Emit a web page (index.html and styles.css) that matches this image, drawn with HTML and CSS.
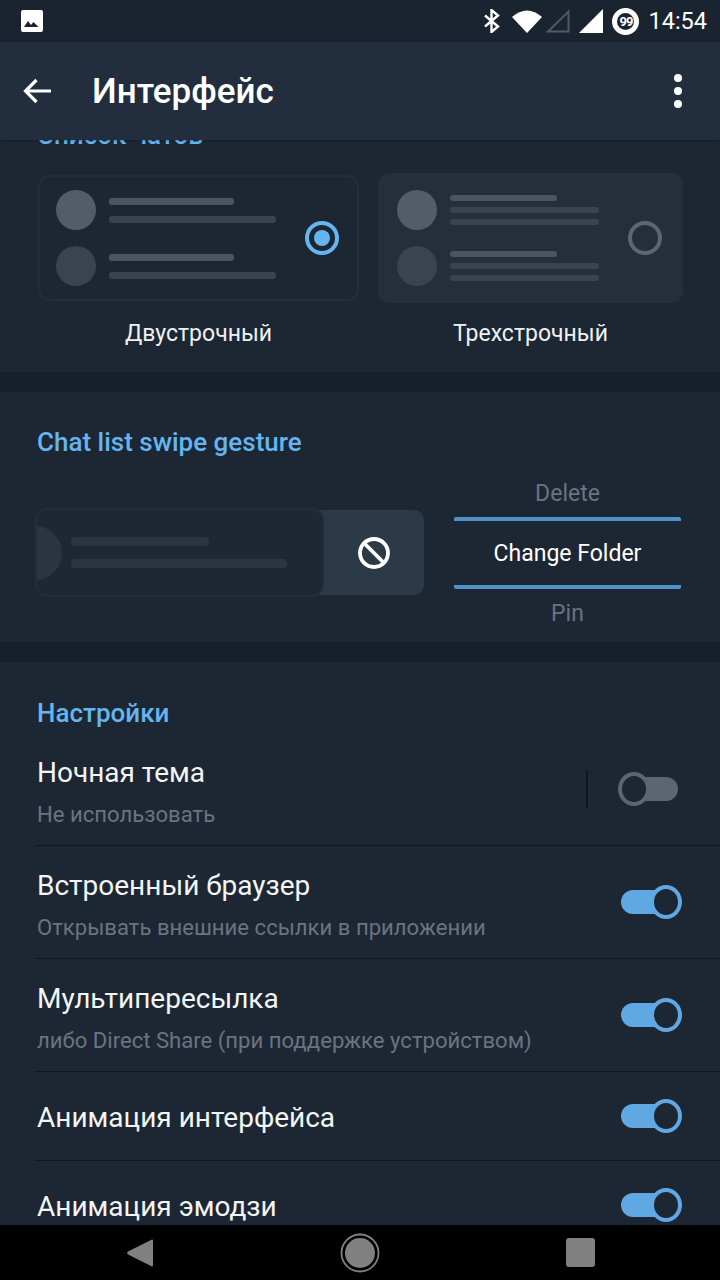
FILE: index.html
```html
<!DOCTYPE html>
<html lang="ru">
<head>
    <meta charset="UTF-8">
    <title>Интерфейс</title>
    <link rel="stylesheet" href="styles.css">
</head>
<body>

<div class="status-bar">
    <svg class="status-pic" width="22" height="22" viewBox="0 0 22 22"><rect width="22" height="22" rx="2" fill="#fff"/><path d="M3 17l4-6 3 4 2.500-3 5 5z" fill="#1a2430"/></svg>
    <div class="status-right">
        <svg class="st-bt" width="17" height="24" viewBox="0 0 17 24"><path d="M2 6.500l13 11-6.500 5.500V1l6.500 5.500-13 11" fill="none" stroke="#fff" stroke-width="2.400"/></svg>
        <svg class="st-wifi" width="30" height="24" viewBox="0 0 30 24"><path d="M0 8Q15-5 30 8L15 24z" fill="#fff"/></svg>
        <svg class="st-sig" width="24" height="24" viewBox="0 0 24 24"><path d="M2 22.500L22.500 2.500v20z" fill="none" stroke="#4f5863" stroke-width="2"/></svg>
        <svg class="st-sig2" width="24" height="24" viewBox="0 0 24 24"><path d="M0 24L24 0v24z" fill="#fff"/></svg>
        <div class="st-batt">99</div>
        <span class="st-time">14:54</span>
    </div>
</div>

<header class="app-bar">
    <svg width="30" height="26" viewBox="0 0 30 26"><path d="M28 13H3M13.500 2L2.500 13l11 11" fill="none" stroke="#fff" stroke-width="3.200"/></svg>
    <h1>Интерфейс</h1>
    <div class="dots"><i></i><i></i><i></i></div>
</header>

<main>
    <section class="sec sec-list">
        <h2 class="sec-title cut">Список чатов</h2>
        <div class="cards">
            <div class="option">
                <div class="card card-two">
                    <div class="previews">
                        <div class="pv"><b class="av"></b><div class="lines"><u class="l1"></u><u class="l2"></u></div></div>
                        <div class="pv dim"><b class="av"></b><div class="lines"><u class="l1"></u><u class="l2"></u></div></div>
                    </div>
                    <span class="radio on"></span>
                </div>
                <div class="opt-label">Двустрочный</div>
            </div>
            <div class="option">
                <div class="card card-three">
                    <div class="previews">
                        <div class="pv"><b class="av"></b><div class="lines"><u class="l1"></u><u class="l2"></u><u class="l2"></u></div></div>
                        <div class="pv dim"><b class="av"></b><div class="lines"><u class="l1"></u><u class="l2"></u><u class="l2"></u></div></div>
                    </div>
                    <span class="radio"></span>
                </div>
                <div class="opt-label">Трехстрочный</div>
            </div>
        </div>
    </section>

    <section class="sec sec-swipe">
        <h2 class="sec-title">Chat list swipe gesture</h2>
        <div class="swipe">
            <div class="swipe-demo">
                <div class="swipe-front">
                    <b class="half"></b>
                    <div class="swipe-lines"><u></u><u></u></div>
                </div>
                <div class="swipe-action">
                    <svg width="34" height="34" viewBox="0 0 34 34"><circle cx="17" cy="17" r="14" fill="none" stroke="#fff" stroke-width="3.800"/><path d="M7 7l20 20" stroke="#fff" stroke-width="3.800"/></svg>
                </div>
            </div>
            <div class="picker">
                <div class="pick">Delete</div>
                <div class="pick sel">Change Folder</div>
                <div class="pick">Pin</div>
            </div>
        </div>
    </section>

    <section class="sec sec-settings">
        <h2 class="sec-title">Настройки</h2>
        <div class="row">
            <div class="row-text"><div class="row-name">Ночная тема</div><div class="row-sub">Не использовать</div></div>
            <span class="vline"></span>
            <span class="toggle"></span>
        </div>
        <div class="row">
            <div class="row-text"><div class="row-name">Встроенный браузер</div><div class="row-sub">Открывать внешние ссылки в приложении</div></div>
            <span class="toggle on"></span>
        </div>
        <div class="row">
            <div class="row-text"><div class="row-name">Мультипересылка</div><div class="row-sub">либо Direct Share (при поддержке устройством)</div></div>
            <span class="toggle on"></span>
        </div>
        <div class="row">
            <div class="row-text single"><div class="row-name">Анимация интерфейса</div></div>
            <span class="toggle on"></span>
        </div>
        <div class="row">
            <div class="row-text single"><div class="row-name">Анимация эмодзи</div></div>
            <span class="toggle on"></span>
        </div>
    </section>
</main>

<nav class="nav-bar">
    <svg width="26" height="30" viewBox="0 0 26 30"><path d="M25 1.500a1 1 0 0 1 1 1v25a1 1 0 0 1-1 1L1 16.500a2 2 0 0 1 0-3z" fill="#808080"/></svg>
    <svg width="40" height="40" viewBox="0 0 40 40"><circle cx="20" cy="20" r="18.500" fill="none" stroke="#808080" stroke-width="1.800"/><circle cx="20" cy="20" r="15" fill="#808080"/></svg>
    <span class="nav-square"></span>
</nav>

</body>
</html>
```

FILE: styles.css
```css
*, *::before, *::after {
    box-sizing: border-box;
}
html, body {
    margin: 0;
    height: 100%;
}
body {
    width: 720px;
    height: 1280px;
    display: flex;
    flex-direction: column;
    overflow: hidden;
    font-family: Roboto, "Noto Sans", sans-serif;
    background: #17202a;
    color: #fff;
}
h1, h2 {
    margin: 0;
}

/* status bar */
.status-bar {
    height: 42px;
    flex: none;
    background: #1a2430;
    display: flex;
    align-items: center;
    justify-content: space-between;
    padding: 0 13px 0 21px;
}
.status-right {
    display: flex;
    align-items: center;
}
.st-wifi {
    margin-left: 12px;
}
.st-sig {
    margin-left: 4px;
}
.st-sig2 {
    margin-left: 9px;
}
.st-batt {
    width: 27px;
    height: 27px;
    margin-left: 9px;
    border: 5px solid #fff;
    border-radius: 50%;
    font-size: 13px;
    font-weight: 700;
    line-height: 17px;
    text-align: center;
    letter-spacing: -1px;
}
.st-time {
    margin-left: 9px;
    font-size: 23.500px;
    line-height: 28px;
}

/* app bar */
.app-bar {
    height: 98px;
    flex: none;
    background: #222e3d;
    display: flex;
    align-items: center;
    padding: 0 38px 0 23px;
    position: relative;
    z-index: 2;
    box-shadow: 0 1px 2px rgba(0, 0, 0, .25);
}
.app-bar h1 {
    margin-left: 39px;
    font-size: 35px;
    font-weight: 500;
}
.dots {
    margin-left: auto;
    display: flex;
    flex-direction: column;
    gap: 5px;
}
.dots i {
    width: 8px;
    height: 8px;
    border-radius: 50%;
    background: #fff;
}

/* sections */
main {
    flex: 1;
    min-height: 0;
    overflow: hidden;
}
.sec {
    background: #1d2733;
    margin-bottom: 20px;
}
.sec-title {
    font-size: 26px;
    font-weight: 500;
    line-height: 30px;
    color: #64b5f0;
    padding-left: 37px;
}
.cut {
    margin-top: -20px;
}

/* chat list type */
.sec-list {
    height: 252px;
}
.cards {
    display: flex;
    align-items: flex-start;
    padding: 23px 37px 0 38px;
    gap: 19px;
}
.option:first-child {
    width: 321px;
    padding-top: 2px;
}
.option:last-child {
    width: 305px;
}
.card {
    display: flex;
    align-items: center;
    border-radius: 12px;
}
.card-two {
    height: 126px;
    border: 2px solid #232e3b;
    padding: 0 18px 0 16px;
}
.card-three {
    height: 130px;
    background: #252f3c;
    padding: 0 21px 0 19px;
}
.previews {
    display: flex;
    flex-direction: column;
    gap: 16px;
}
.pv {
    display: flex;
    align-items: center;
    height: 40px;
}
.av {
    width: 40px;
    height: 40px;
    border-radius: 50%;
    background: #535c68;
    margin-right: 13px;
}
.dim .av {
    background: #3a444f;
}
.lines {
    display: flex;
    flex-direction: column;
    gap: 11px;
}
.lines u {
    display: block;
    height: 7px;
    border-radius: 3px;
    background: #4b5561;
}
.lines u.l2 {
    background: #3a444f;
}
.card-two .l1 {
    width: 125px;
}
.card-two .l2 {
    width: 167px;
}
.card-three .lines {
    gap: 6px;
}
.card-three .lines u {
    height: 6px;
}
.card-three .l1 {
    width: 107px;
}
.card-three .l2 {
    width: 149px;
}
.radio {
    width: 34px;
    height: 34px;
    margin-left: auto;
    border: 4px solid #5c6670;
    border-radius: 50%;
}
.radio.on {
    border-color: #64b5f0;
    padding: 5px;
}
.radio.on::before {
    content: "";
    display: block;
    width: 16px;
    height: 16px;
    border-radius: 50%;
    background: #64b5f0;
}
.opt-label {
    text-align: center;
    font-size: 23px;
    line-height: 28px;
    margin-top: 17px;
    color: #eef1f4;
}
.option:first-child .opt-label {
    margin-top: 19px;
}

/* swipe gesture */
.sec-swipe {
    height: 250px;
    padding-top: 35px;
}
.swipe {
    display: flex;
    align-items: center;
    padding-left: 35px;
    margin-top: 9px;
    height: 160px;
}
.swipe-demo {
    width: 389px;
    height: 85px;
    margin-top: 13px;
    background: #2c3a48;
    border-radius: 10px;
    display: flex;
    align-items: center;
}
.swipe-front {
    width: 289px;
    height: 89px;
    flex: none;
    background: #1e2834;
    border: 2px solid #232e3a;
    border-radius: 12px;
    display: flex;
    align-items: center;
    overflow: hidden;
}
.half {
    width: 27px;
    height: 54px;
    flex: none;
    margin-left: -2px;
    border-radius: 0 27px 27px 0;
    background: #2b3542;
}
.swipe-lines {
    margin-left: 9px;
    display: flex;
    flex-direction: column;
    gap: 13px;
}
.swipe-lines u {
    display: block;
    height: 9px;
    width: 216px;
    border-radius: 4px;
    background: #2b3542;
}
.swipe-lines u:first-child {
    width: 138px;
}
.swipe-action {
    flex: 1;
    display: flex;
    justify-content: center;
}
.picker {
    width: 227px;
    margin-left: 30px;
    margin-top: 13px;
}
.pick {
    height: 48px;
    padding-top: 2px;
    display: flex;
    align-items: center;
    justify-content: center;
    font-size: 23px;
    color: #6a7380;
}
.pick.sel {
    height: 72px;
    padding-top: 2px;
    color: #fff;
    border-top: 4px solid #4f93c9;
    border-bottom: 4px solid #4f93c9;
    border-radius: 2px;
}

/* settings rows */
.sec-settings {
    margin-bottom: 0;
    padding-top: 36px;
}
.row {
    margin-left: 35px;
    padding-left: 2px;
    display: flex;
    align-items: center;
    border-bottom: 1px solid #10171f;
    height: 113px;
    padding-right: 38px;
}
.sec-title + .row {
    margin-top: 5px;
}
.row:nth-child(n+5) {
    height: 89px;
}
.row-text {
    flex: 1;
    padding-top: 7px;
}
.row-text.single {
    padding-top: 4px;
}
.row-name {
    font-size: 28px;
    line-height: 30px;
    color: #f3f5f7;
}
.row-sub {
    margin-top: 12px;
    font-size: 22.100px;
    line-height: 28px;
    color: #6a7380;
}
.vline {
    width: 2px;
    height: 38px;
    background: #0f1720;
    margin-right: 30px;
}

/* the thumb sits on top of the track */
.toggle {
    width: 64px;
    height: 34px;
    position: relative;
}
.toggle::before {
    content: "";
    position: absolute;
    left: 3px;
    right: 4px;
    top: 5px;
    height: 24px;
    border-radius: 12px;
    background: #5c6570;
}
.toggle::after {
    content: "";
    position: absolute;
    left: 0;
    top: 0;
    width: 32px;
    height: 34px;
    border-radius: 50%;
    border: 4px solid #5c6570;
    background: #1d2733;
}
.toggle.on::before {
    background: #5fa8e3;
}
.toggle.on::after {
    left: auto;
    right: 0;
    border-color: #5fa8e3;
}

/* nav bar */
.nav-bar {
    height: 55px;
    flex: none;
    background: #000;
    position: relative;
    z-index: 2;
    display: flex;
    align-items: center;
    padding: 0 125px 0 127px;
    justify-content: space-between;
}
.nav-square {
    width: 29px;
    height: 29px;
    border-radius: 3px;
    background: #808080;
}
```
